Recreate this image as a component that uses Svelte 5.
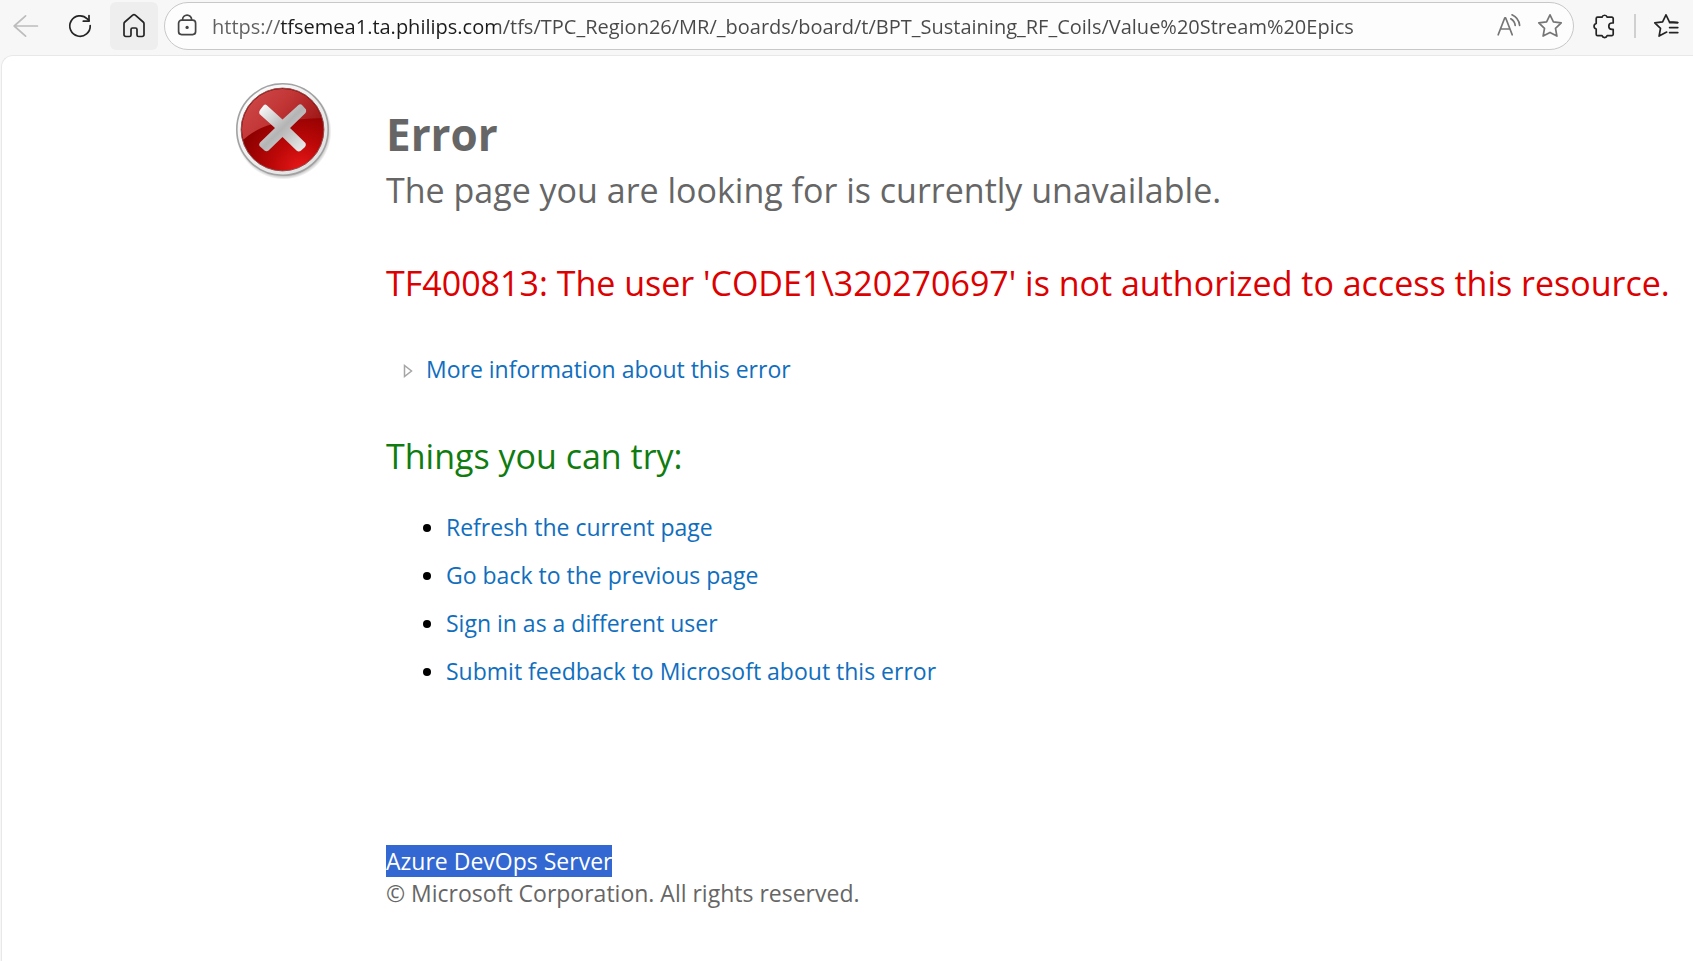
<script lang="ts">
  let url = $state(
    "https://tfsemea1.ta.philips.com/tfs/TPC_Region26/MR/_boards/board/t/BPT_Sustaining_RF_Coils/Value%20Stream%20Epics"
  );

  const suggestions: { id: string; label: string }[] = [
    { id: "refresh", label: "Refresh the current page" },
    { id: "back", label: "Go back to the previous page" },
    { id: "signin", label: "Sign in as a different user" },
    { id: "feedback", label: "Submit feedback to Microsoft about this error" },
  ];
</script>

<div class="browser">
  <header class="toolbar">
    <button class="tool" aria-label="Back" disabled>
      <svg class="icon" viewBox="0 0 28 28">
        <path d="M25.4 14H2.2M13.600 3.800 2.200 14 13.600 24.200" />
      </svg>
    </button>
    <button class="tool" aria-label="Refresh">
      <svg class="icon" viewBox="0 0 28 28">
        <path d="M24.2 13.5A10.2 10.2 0 1 1 21.3 6.9l1.7 1.8" />
        <path d="M23 3.5v5.7h-5.7" />
      </svg>
    </button>
    <button class="tool hovered" aria-label="Home">
      <svg class="icon" viewBox="0 0 28 28">
        <path d="M12.7 3.2 4.8 10a2.2 2.2 0 0 0-.8 1.7v11a1.8 1.8 0 0 0 1.8 1.8h3.6a1.6 1.6 0 0 0 1.6-1.6v-5.4a1.5 1.5 0 0 1 1.5-1.5h3a1.5 1.5 0 0 1 1.5 1.5v5.4a1.6 1.6 0 0 0 1.6 1.6h3.6a1.8 1.8 0 0 0 1.8-1.8v-11a2.2 2.2 0 0 0-.8-1.7l-7.9-6.8a2 2 0 0 0-2.6 0z" />
      </svg>
    </button>

    <div class="address">
      <button class="inner" aria-label="Site information">
        <svg class="icon" viewBox="0 0 28 28">
          <rect x="5.6" y="8.2" width="17" height="14.4" rx="3" />
          <path d="M9.6 8.2V7.600a4.5 4.5 0 0 1 9 0v.6" />
          <circle class="dot" cx="14.1" cy="15.4" r="1.6" />
        </svg>
      </button>
      <input type="text" aria-label="Address" spellcheck="false" bind:value={url} />
      <button class="inner pale" aria-label="Read aloud">
        <svg class="icon" viewBox="0 0 28 28">
          <path d="M3.2 22.8 9.8 5.8h.8l6.6 17M5.8 17h8.8" />
          <path d="M15.8 6.8a9 9 0 0 1 4.4 6.6M17 2.8a13 13 0 0 1 7.6 10.6" />
        </svg>
      </button>
      <button class="inner pale" aria-label="Add to favorites">
        <svg class="icon" viewBox="0 0 28 28">
          <path d="m14 2.8 3.4 7 7.8 1.1-5.7 5.4 1.4 7.8-6.9-3.7-6.9 3.7 1.4-7.8-5.7-5.4 7.8-1.1z" />
        </svg>
      </button>
    </div>

    <button class="tool" aria-label="Extensions">
      <svg class="icon" viewBox="0 0 28 28">
        <path d="M7.6 5.2H12a2.7 2.7 0 0 1 5.2 0h4.6a1.4 1.4 0 0 1 1.4 1.4V11H22a3.2 3.2 0 0 0 0 6.4h1.2v4.8a1.4 1.4 0 0 1-1.4 1.4h-4.6a2.7 2.7 0 0 1-5.2 0H7.6a1.4 1.4 0 0 1-1.4-1.4v-5.1a2.9 2.9 0 0 1 0-5.6V6.6a1.4 1.4 0 0 1 1.4-1.4z" />
      </svg>
    </button>
    <span class="divider"></span>
    <button class="tool" aria-label="Favorites">
      <svg class="icon" viewBox="0 0 28 28">
        <path d="M25.4 10.6 21.4 10.2 17.4 9.8 14 2.8l-3.4 7L2.8 10.9l5.7 5.4-1.4 7.8 7.6-4" />
        <path d="M17.6 10.6h8.2M17.6 15.6h8.2M17.6 20.6h8.2" />
      </svg>
    </button>
  </header>

  <main class="page">
    <svg class="error-icon" viewBox="0 0 96 98" role="img" aria-label="Error">
      <defs>
        <linearGradient id="rim" x1="0" y1="0" x2="1" y2="1">
          <stop offset="0" stop-color="#fff" />
          <stop offset="1" stop-color="#dcdcdc" />
        </linearGradient>
        <radialGradient id="ball" cx="0.72" cy="0.98" r="0.75">
          <stop offset="0" stop-color="#e81818" />
          <stop offset="0.45" stop-color="#bd0808" />
          <stop offset="1" stop-color="#8c0000" />
        </radialGradient>
        <linearGradient id="gloss" x1="0" y1="0" x2="1" y2="0.6">
          <stop offset="0" stop-color="#d65252" />
          <stop offset="0.5" stop-color="#c23636" />
          <stop offset="1" stop-color="#951010" />
        </linearGradient>
        <linearGradient id="cross" x1="0" y1="0" x2="1" y2="1">
          <stop offset="0" stop-color="#fff" />
          <stop offset="0.5" stop-color="#b4b4b4" />
          <stop offset="1" stop-color="#f0f0f0" />
        </linearGradient>
        <radialGradient id="shadow">
          <stop offset="0.86" stop-color="#777" stop-opacity="0.8" />
          <stop offset="1" stop-color="#777" stop-opacity="0" />
        </radialGradient>
        <clipPath id="disc"><circle cx="46.5" cy="47.5" r="40.5" /></clipPath>
      </defs>
      <circle cx="47.5" cy="49.5" r="48" fill="url(#shadow)" />
      <circle cx="46.5" cy="47.5" r="45.7" fill="url(#rim)" stroke="#a2a2a2" stroke-width="1.6" />
      <circle cx="46.5" cy="47.5" r="41.4" fill="url(#ball)" stroke="#8f4a4a" />
      <path d="M0 66C16 44 44 36 96 36V0H0z" fill="url(#gloss)" clip-path="url(#disc)" />
      <path
        d="M30.500 23 46.500 37.500 62.500 23Q64.500 21.500 66.500 23.500L70 27.500Q70.500 29.500 69.500 31L54 46 69.500 61Q70.500 63 69 65L64.500 69Q62.500 70 60.500 68.500L46.500 55 32.500 68.500Q30.500 70 28.500 68.500L23.500 64Q22.500 62 24 60.500L39 46 23.500 32Q22.500 30 24 28L27.500 23.500Q29 22 30.500 23z"
        fill="url(#cross)"
      />
    </svg>

    <div class="content">
      <h1>Error</h1>
      <p class="subtitle">The page you are looking for is currently unavailable.</p>
      <p class="message">TF400813: The user 'CODE1\320270697' is not authorized to access this resource.</p>

      <div class="more">
        <svg class="expander" viewBox="0 0 10 14">
          <path d="M1.5 1.5v11L8.5 7z" />
        </svg>
        <a href="#details">More information about this error</a>
      </div>

      <h2>Things you can try:</h2>
      <ul>
        {#each suggestions as item (item.id)}
          <li><a href="#{item.id}">{item.label}</a></li>
        {/each}
      </ul>

      <footer>
        <div><span class="selected">Azure DevOps Server</span></div>
        <div>© Microsoft Corporation. All rights reserved.</div>
      </footer>
    </div>
  </main>
</div>

<style>
  :global(body) {
    margin: 0;
    background: #f7f7f7;
  }
  .browser {
    display: flex;
    flex-direction: column;
    min-height: 100vh;
    font-family: "Segoe UI", "Open Sans", "Noto Sans", sans-serif;
    font-size: 23px;
    color: #666;
  }
  .toolbar {
    display: flex;
    align-items: center;
    gap: 6px;
    padding: 2px 3px 5px 2px;
  }
  .tool,
  .inner {
    display: flex;
    flex: none;
    align-items: center;
    justify-content: center;
    padding: 0;
    border: none;
    background: transparent;
    color: #242424;
  }
  .tool {
    width: 48px;
    height: 48px;
    border-radius: 6px;
  }
  .tool:disabled {
    color: #bdbdbd;
  }
  .tool.hovered {
    background: #eee;
  }
  .inner {
    width: 28px;
    height: 28px;
    color: #444;
  }
  .inner.pale {
    width: 30px;
    color: #757575;
  }
  .icon {
    flex: none;
    width: 28px;
    height: 28px;
    fill: none;
    stroke: currentColor;
    stroke-width: 1.7;
    stroke-linecap: round;
    stroke-linejoin: round;
  }
  .icon .dot {
    fill: currentColor;
    stroke: none;
  }
  .address {
    display: flex;
    flex: 1;
    align-items: center;
    gap: 11px;
    min-width: 0;
    height: 48px;
    box-sizing: border-box;
    padding: 0 8px;
    border: 1px solid #c8c8c8;
    border-radius: 24px;
    background: #fdfdfd;
  }
  .address input {
    flex: 1;
    min-width: 0;
    padding: 2px 0 0;
    border: none;
    outline: none;
    font-family: inherit;
    font-size: 20px;
    line-height: 28px;
    /* the host name is darker than the rest of the address */
    color: transparent;
    caret-color: #1b1b1b;
    background: linear-gradient(90deg, #606060 68px, #1b1b1b 68px 285px, #484848 285px);
    background-clip: text;
  }
  .divider {
    width: 2px;
    height: 24px;
    background: #d0d0d0;
  }
  .page {
    display: flex;
    flex: 1;
    align-items: flex-start;
    gap: 54px;
    margin-left: 1px;
    padding: 26px 20px 40px 234px;
    border-top: 1px solid #e8e8e8;
    border-left: 1px solid #e8e8e8;
    border-top-left-radius: 12px;
    background: #fff;
  }
  .error-icon {
    flex: none;
    width: 96px;
    height: 98px;
  }
  .content {
    flex: 1;
    min-width: 0;
    padding-top: 24px;
  }
  h1,
  h2,
  p,
  ul {
    margin: 0;
    font-weight: 400;
  }
  h1 {
    font-size: 44px;
    font-weight: 700;
    line-height: 56px;
  }
  .subtitle {
    font-size: 34px;
    line-height: 56px;
  }
  .message {
    margin-top: 41px;
    font-size: 34px;
    line-height: 48px;
    color: #dc0000;
  }
  a {
    color: #106ebe;
    text-decoration: none;
  }
  a:hover {
    text-decoration: underline;
  }
  .more {
    display: flex;
    align-items: center;
    gap: 13px;
    margin-top: 46px;
    padding-left: 17px;
    line-height: 32px;
  }
  .expander {
    width: 10px;
    height: 14px;
    margin-top: 4px;
    fill: none;
    stroke: #a6a6a6;
    stroke-width: 1.5;
  }
  h2 {
    margin-top: 47px;
    font-size: 34px;
    line-height: 48px;
    color: #107c10;
  }
  ul {
    margin-top: 23px;
    padding-left: 60px;
    line-height: 48px;
  }
  li::marker {
    color: #000;
  }
  footer {
    margin-top: 150px;
    line-height: 32px;
  }
  .selected {
    display: inline-block;
    background: #3367d1;
    color: #fff;
  }
</style>
